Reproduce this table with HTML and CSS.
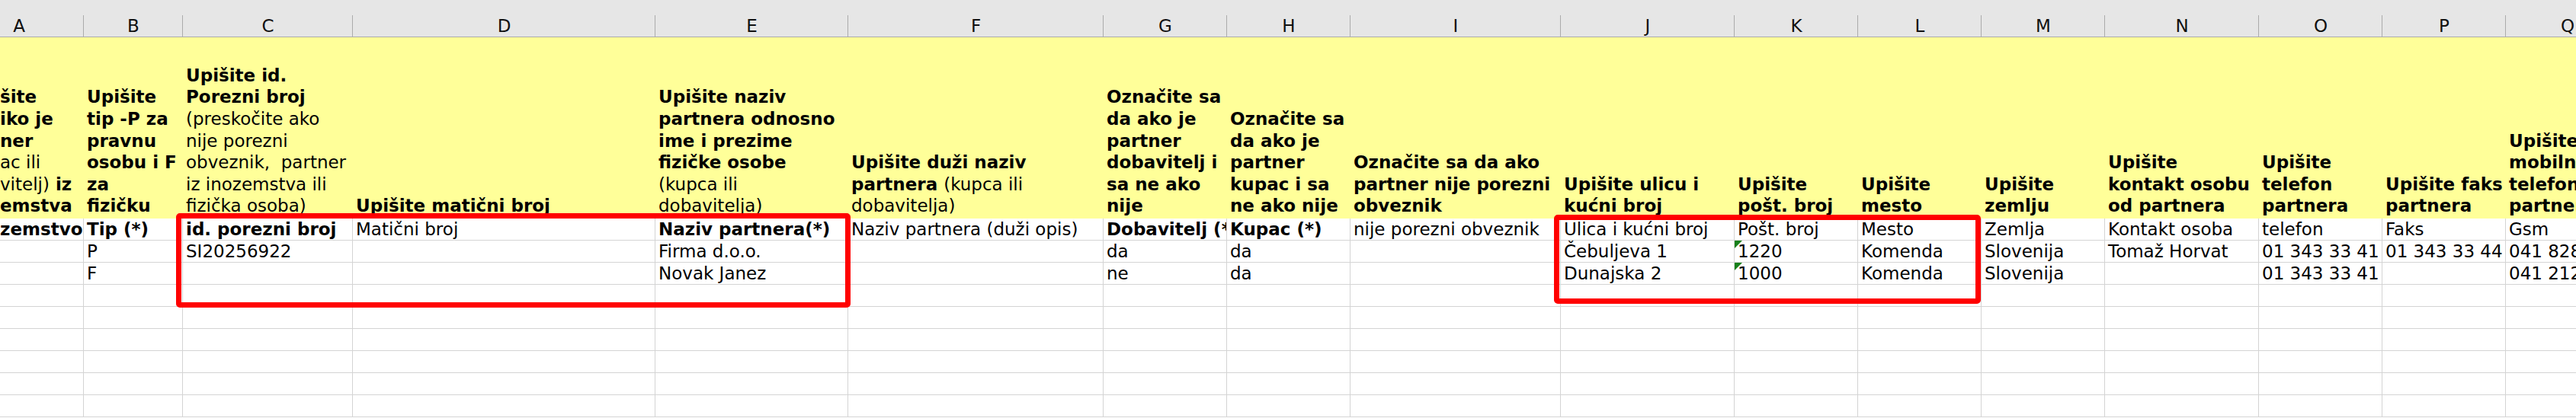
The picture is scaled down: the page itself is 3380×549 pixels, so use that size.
FILE: index.html
```html
<!DOCTYPE html>
<html lang="sl">
<head>
<meta charset="utf-8">
<title>Partnerji</title>
<link rel="stylesheet" href="styles.css">
</head>
<body>
<div class="sheet">
  <div class="ch first">A</div><div class="ch">B</div><div class="ch">C</div><div class="ch">D</div><div class="ch">E</div><div class="ch">F</div><div class="ch">G</div><div class="ch">H</div><div class="ch">I</div><div class="ch">J</div><div class="ch">K</div><div class="ch">L</div><div class="ch">M</div><div class="ch">N</div><div class="ch">O</div><div class="ch">P</div><div class="ch">Q</div>

  <div class="h first"><div>šite<br>iko je<br>ner<br><span class="n">ac ili</span><br><span class="n">vitelj)</span> iz<br>emstva</div></div>
  <div class="h"><div>Upišite<br>tip -P za<br>pravnu<br>osobu i F<br>za<br>fizičku</div></div>
  <div class="h"><div>Upišite id.<br>Porezni broj<br><span class="n">(preskočite ako<br>nije porezni<br>obveznik,&nbsp; partner<br>iz inozemstva ili<br>fizička osoba)</span></div></div>
  <div class="h"><div>Upišite matični broj</div></div>
  <div class="h"><div>Upišite naziv<br>partnera odnosno<br>ime i prezime<br>fizičke osobe<br><span class="n">(kupca ili<br>dobavitelja)</span></div></div>
  <div class="h"><div>Upišite duži naziv<br>partnera <span class="n">(kupca ili<br>dobavitelja)</span></div></div>
  <div class="h"><div>Označite sa<br>da ako je<br>partner<br>dobavitelj i<br>sa ne ako<br>nije</div></div>
  <div class="h"><div>Označite sa<br>da ako je<br>partner<br>kupac i sa<br>ne ako nije</div></div>
  <div class="h"><div>Označite sa da ako<br>partner nije porezni<br>obveznik</div></div>
  <div class="h"><div>Upišite ulicu i<br>kućni broj</div></div>
  <div class="h"><div>Upišite<br>pošt. broj</div></div>
  <div class="h"><div>Upišite<br>mesto</div></div>
  <div class="h"><div>Upišite<br>zemlju</div></div>
  <div class="h"><div>Upišite<br>kontakt osobu<br>od partnera</div></div>
  <div class="h"><div>Upišite<br>telefon<br>partnera</div></div>
  <div class="h"><div>Upišite faks<br>partnera</div></div>
  <div class="h"><div>Upišite<br>mobilni<br>telefon<br>partnera</div></div>

  <div class="c b first">zemstvo (*)</div><div class="c b">Tip (*)</div><div class="c b">id. porezni broj</div><div class="c">Matični broj</div><div class="c b">Naziv partnera(*)</div><div class="c">Naziv partnera (duži opis)</div><div class="c b">Dobavitelj (*)</div><div class="c b">Kupac (*)</div><div class="c">nije porezni obveznik</div><div class="c">Ulica i kućni broj</div><div class="c">Pošt. broj</div><div class="c">Mesto</div><div class="c">Zemlja</div><div class="c">Kontakt osoba</div><div class="c">telefon</div><div class="c">Faks</div><div class="c">Gsm</div>

  <div class="c first"></div><div class="c">P</div><div class="c">SI20256922</div><div class="c"></div><div class="c">Firma d.o.o.</div><div class="c"></div><div class="c">da</div><div class="c">da</div><div class="c"></div><div class="c">Čebuljeva 1</div><div class="c txt">1220</div><div class="c">Komenda</div><div class="c">Slovenija</div><div class="c">Tomaž Horvat</div><div class="c">01 343 33 41</div><div class="c">01 343 33 44</div><div class="c">041 828 111</div>

  <div class="c first"></div><div class="c">F</div><div class="c"></div><div class="c"></div><div class="c">Novak Janez</div><div class="c"></div><div class="c">ne</div><div class="c">da</div><div class="c"></div><div class="c">Dunajska 2</div><div class="c txt">1000</div><div class="c">Komenda</div><div class="c">Slovenija</div><div class="c"></div><div class="c">01 343 33 41</div><div class="c"></div><div class="c">041 212 111</div>

  <div class="c first"></div><div class="c"></div><div class="c"></div><div class="c"></div><div class="c"></div><div class="c"></div><div class="c"></div><div class="c"></div><div class="c"></div><div class="c"></div><div class="c"></div><div class="c"></div><div class="c"></div><div class="c"></div><div class="c"></div><div class="c"></div><div class="c"></div>
  <div class="c first"></div><div class="c"></div><div class="c"></div><div class="c"></div><div class="c"></div><div class="c"></div><div class="c"></div><div class="c"></div><div class="c"></div><div class="c"></div><div class="c"></div><div class="c"></div><div class="c"></div><div class="c"></div><div class="c"></div><div class="c"></div><div class="c"></div>
  <div class="c first"></div><div class="c"></div><div class="c"></div><div class="c"></div><div class="c"></div><div class="c"></div><div class="c"></div><div class="c"></div><div class="c"></div><div class="c"></div><div class="c"></div><div class="c"></div><div class="c"></div><div class="c"></div><div class="c"></div><div class="c"></div><div class="c"></div>
  <div class="c first"></div><div class="c"></div><div class="c"></div><div class="c"></div><div class="c"></div><div class="c"></div><div class="c"></div><div class="c"></div><div class="c"></div><div class="c"></div><div class="c"></div><div class="c"></div><div class="c"></div><div class="c"></div><div class="c"></div><div class="c"></div><div class="c"></div>
  <div class="c first"></div><div class="c"></div><div class="c"></div><div class="c"></div><div class="c"></div><div class="c"></div><div class="c"></div><div class="c"></div><div class="c"></div><div class="c"></div><div class="c"></div><div class="c"></div><div class="c"></div><div class="c"></div><div class="c"></div><div class="c"></div><div class="c"></div>
  <div class="c first"></div><div class="c"></div><div class="c"></div><div class="c"></div><div class="c"></div><div class="c"></div><div class="c"></div><div class="c"></div><div class="c"></div><div class="c"></div><div class="c"></div><div class="c"></div><div class="c"></div><div class="c"></div><div class="c"></div><div class="c"></div><div class="c"></div>

  <div class="mark m1"></div>
  <div class="mark m2"></div>
</div>
</body>
</html>
```
FILE: styles.css
```css
html, body {
  margin: 0;
  padding: 0;
  background: #ffffff;
}
body {
  width: 3380px;
  height: 549px;
  overflow: hidden;
  font-family: "DejaVu Sans", Verdana, sans-serif;
  font-size: 23px;
  color: #000000;
}
.sheet {
  position: relative;
  display: grid;
  grid-template-columns: 110px 130px 223px 397px 253px 335px 162px 162px 276px 228px 162px 162px 162px 202px 162px 162px 162px;
  grid-template-rows: 49px 238px repeat(9, 29px);
  width: 3450px;
}
.ch {
  box-sizing: border-box;
  height: 49px;
  padding-top: 21px;
  line-height: 27px;
  text-align: center;
  color: #111111;
  background: #e6e6e6 linear-gradient(#ababab, #ababab) right bottom / 1px 28px no-repeat;
  border-bottom: 1px solid #ababab;
  overflow: hidden;
}
.ch.first {
  padding-right: 60px;
}
.h {
  box-sizing: border-box;
  background: #ffff99;
  padding: 0 4px 2px 4px;
  display: flex;
  flex-direction: column;
  justify-content: flex-end;
  line-height: 28.6px;
  font-weight: bold;
  white-space: nowrap;
  overflow: hidden;
}
.h.first {
  padding-left: 0;
}
.n {
  font-weight: normal;
}
.c {
  box-sizing: border-box;
  position: relative;
  border-right: 1px solid #d4d4d4;
  border-bottom: 1px solid #d4d4d4;
  padding: 0 4px;
  line-height: 28px;
  white-space: nowrap;
  overflow: hidden;
}
.c.first {
  padding-left: 0;
}
.b {
  font-weight: bold;
}
.txt::before {
  content: "";
  position: absolute;
  left: 0;
  top: 0;
  border-top: 10px solid #17801a;
  border-right: 10px solid transparent;
}
.mark {
  position: absolute;
  box-sizing: border-box;
  border: 7px solid #ff0000;
  border-radius: 5px;
  pointer-events: none;
}
.m1 {
  left: 231px;
  top: 280px;
  width: 885px;
  height: 124px;
}
.m2 {
  left: 2039px;
  top: 282px;
  width: 560px;
  height: 117px;
}
```
